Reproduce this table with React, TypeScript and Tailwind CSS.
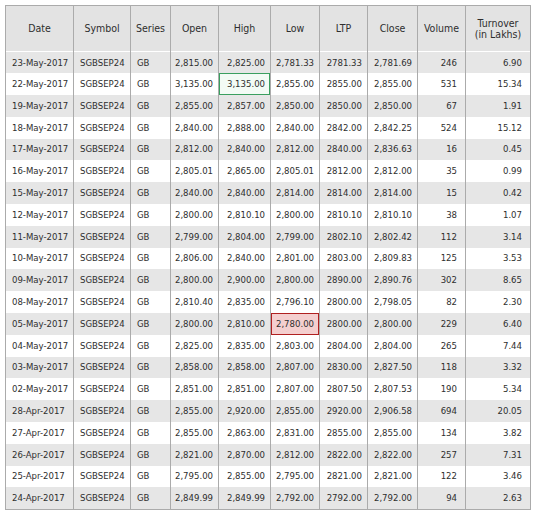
import React from "react";

type Row = {
  date: string;
  open: string;
  high: string;
  low: string;
  ltp: string;
  close: string;
  volume: string;
  turnover: string;
};

const rows: Row[] = [
  { date: "23-May-2017", open: "2,815.00", high: "2,825.00", low: "2,781.33", ltp: "2781.33", close: "2,781.69", volume: "246", turnover: "6.90" },
  { date: "22-May-2017", open: "3,135.00", high: "3,135.00", low: "2,855.00", ltp: "2855.00", close: "2,855.00", volume: "531", turnover: "15.34" },
  { date: "19-May-2017", open: "2,855.00", high: "2,857.00", low: "2,850.00", ltp: "2850.00", close: "2,850.00", volume: "67", turnover: "1.91" },
  { date: "18-May-2017", open: "2,840.00", high: "2,888.00", low: "2,840.00", ltp: "2842.00", close: "2,842.25", volume: "524", turnover: "15.12" },
  { date: "17-May-2017", open: "2,812.00", high: "2,840.00", low: "2,812.00", ltp: "2840.00", close: "2,836.63", volume: "16", turnover: "0.45" },
  { date: "16-May-2017", open: "2,805.01", high: "2,865.00", low: "2,805.01", ltp: "2812.00", close: "2,812.00", volume: "35", turnover: "0.99" },
  { date: "15-May-2017", open: "2,840.00", high: "2,840.00", low: "2,814.00", ltp: "2814.00", close: "2,814.00", volume: "15", turnover: "0.42" },
  { date: "12-May-2017", open: "2,800.00", high: "2,810.10", low: "2,800.00", ltp: "2810.10", close: "2,810.10", volume: "38", turnover: "1.07" },
  { date: "11-May-2017", open: "2,799.00", high: "2,804.00", low: "2,799.00", ltp: "2802.10", close: "2,802.42", volume: "112", turnover: "3.14" },
  { date: "10-May-2017", open: "2,806.00", high: "2,840.00", low: "2,801.00", ltp: "2803.00", close: "2,809.83", volume: "125", turnover: "3.53" },
  { date: "09-May-2017", open: "2,800.00", high: "2,900.00", low: "2,800.00", ltp: "2890.00", close: "2,890.76", volume: "302", turnover: "8.65" },
  { date: "08-May-2017", open: "2,810.40", high: "2,835.00", low: "2,796.10", ltp: "2800.00", close: "2,798.05", volume: "82", turnover: "2.30" },
  { date: "05-May-2017", open: "2,800.00", high: "2,810.00", low: "2,780.00", ltp: "2800.00", close: "2,800.00", volume: "229", turnover: "6.40" },
  { date: "04-May-2017", open: "2,825.00", high: "2,835.00", low: "2,803.00", ltp: "2804.00", close: "2,804.00", volume: "265", turnover: "7.44" },
  { date: "03-May-2017", open: "2,858.00", high: "2,858.00", low: "2,807.00", ltp: "2830.00", close: "2,827.50", volume: "118", turnover: "3.32" },
  { date: "02-May-2017", open: "2,851.00", high: "2,851.00", low: "2,807.00", ltp: "2807.50", close: "2,807.53", volume: "190", turnover: "5.34" },
  { date: "28-Apr-2017", open: "2,855.00", high: "2,920.00", low: "2,855.00", ltp: "2920.00", close: "2,906.58", volume: "694", turnover: "20.05" },
  { date: "27-Apr-2017", open: "2,855.00", high: "2,863.00", low: "2,831.00", ltp: "2855.00", close: "2,855.00", volume: "134", turnover: "3.82" },
  { date: "26-Apr-2017", open: "2,821.00", high: "2,870.00", low: "2,812.00", ltp: "2822.00", close: "2,822.00", volume: "257", turnover: "7.31" },
  { date: "25-Apr-2017", open: "2,795.00", high: "2,855.00", low: "2,795.00", ltp: "2821.00", close: "2,821.00", volume: "122", turnover: "3.46" },
  { date: "24-Apr-2017", open: "2,849.99", high: "2,849.99", low: "2,792.00", ltp: "2792.00", close: "2,792.00", volume: "94", turnover: "2.63" },
];

// 52-week high / low markers
const HIGH_ROW = 1;
const LOW_ROW = 12;

const cell = "h-[21.8px] py-0 border-x border-[#ababab] whitespace-nowrap";
const left = `${cell} text-left pl-[6px]`;
const num = `${cell} text-right pr-[5px]`;
const numWide = `${cell} text-right pr-[8px]`;

export default function App() {
  return (
    <div className="bg-white min-h-[526px] p-[5px] text-[#2e2e2e] font-['DejaVu_Sans_Condensed','DejaVu_Sans',sans-serif] [font-stretch:condensed]">
      <table className="table-fixed border-collapse border border-[#ababab] w-[525px]">
        <colgroup>
          <col className="w-[68px]" />
          <col className="w-[57px]" />
          <col className="w-[40px]" />
          <col className="w-[48px]" />
          <col className="w-[52px]" />
          <col className="w-[49px]" />
          <col className="w-[48px]" />
          <col className="w-[50px]" />
          <col className="w-[48px]" />
          <col className="w-[65px]" />
        </colgroup>
        <thead>
          <tr className="bg-[#e3e3e3] text-[10.5px] leading-[11px] border-b border-white">
            {["Date", "Symbol", "Series", "Open", "High", "Low", "LTP", "Close", "Volume"].map((h) => (
              <th key={h} className="h-[46px] font-normal text-center border-x border-[#ababab] px-1">
                {h}
              </th>
            ))}
            <th className="h-[46px] font-normal text-center border-x border-[#ababab] px-1">
              Turnover
              <br />
              (in Lakhs)
            </th>
          </tr>
        </thead>
        <tbody className="text-[9.5px]">
          {rows.map((r, i) => (
            <tr key={r.date} className={i % 2 === 0 ? "bg-[#e6e6e6]" : "bg-white"}>
              <td className={left}>{r.date}</td>
              <td className={`${left} pl-[5px]`}>SGBSEP24</td>
              <td className={left}>GB</td>
              <td className={num}>{r.open}</td>
              <td
                className={
                  i === HIGH_ROW
                    ? `${num} bg-[#f3fbf5] shadow-[inset_0_0_0_1px_#3a9f5f]`
                    : num
                }
              >
                {r.high}
              </td>
              <td
                className={
                  i === LOW_ROW
                    ? `${num} bg-[#f4cfcf] shadow-[inset_0_0_0_1px_#b02020]`
                    : num
                }
              >
                {r.low}
              </td>
              <td className={num}>{r.ltp}</td>
              <td className={num}>{r.close}</td>
              <td className={numWide}>{r.volume}</td>
              <td className={numWide}>{r.turnover}</td>
            </tr>
          ))}
        </tbody>
      </table>
    </div>
  );
}
